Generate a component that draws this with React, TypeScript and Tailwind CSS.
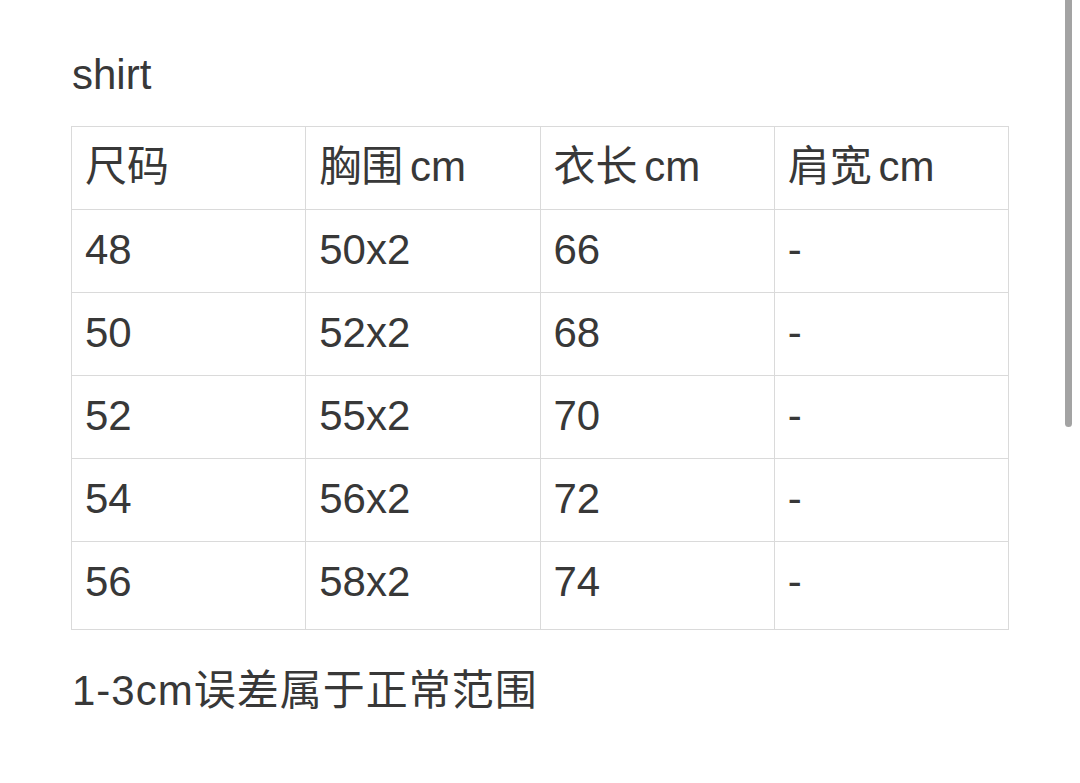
const rows = [
  ['48', '50x2', '66', '-'],
  ['50', '52x2', '68', '-'],
  ['52', '55x2', '70', '-'],
  ['54', '56x2', '72', '-'],
  ['56', '58x2', '74', '-'],
]

const head = ['尺码', '胸围 cm', '衣长 cm', '肩宽 cm']

export default function App() {
  return (
    <div
      className="relative min-h-[783px] w-[1080px] overflow-hidden bg-white text-[#383838]"
      style={{ fontFamily: '"Liberation Sans", "Noto Sans CJK SC", sans-serif' }}
    >
      <div className="pl-[71px] pt-[44px]">
        <p className="h-[62px] pl-px text-[42px] leading-[62px]">shirt</p>

        <table className="mt-[20px] w-[938px] table-fixed border-collapse text-[42px] leading-none">
          <tbody>
            <tr className="h-[83px]">
              {head.map((h) => (
                <td key={h} className="border border-[#dadada] pb-[3px] pl-[13px] align-middle [word-spacing:-5px]">
                  {h}
                </td>
              ))}
            </tr>
            {rows.map((r, ri) => (
              <tr key={r[0]} className={ri === rows.length - 1 ? 'h-[88px]' : 'h-[83px]'}>
                {r.map((c, i) => (
                  <td
                    key={i}
                    className={
                      'border border-[#dadada] pl-[13px] align-middle ' +
                      (ri === rows.length - 1 ? 'pb-[8px]' : 'pb-[2px]')
                    }
                  >
                    {c}
                  </td>
                ))}
              </tr>
            ))}
          </tbody>
        </table>

        <p className="mt-[30px] h-[62px] pl-px text-[42px] leading-[62px] tracking-[1px]">1-3cm误差属于正常范围</p>
      </div>

      {/* scrollbar thumb */}
      <div className="absolute right-[8px] top-0 h-[427px] w-[7px] rounded-b-full bg-[#a3a3a3]" />
    </div>
  )
}
